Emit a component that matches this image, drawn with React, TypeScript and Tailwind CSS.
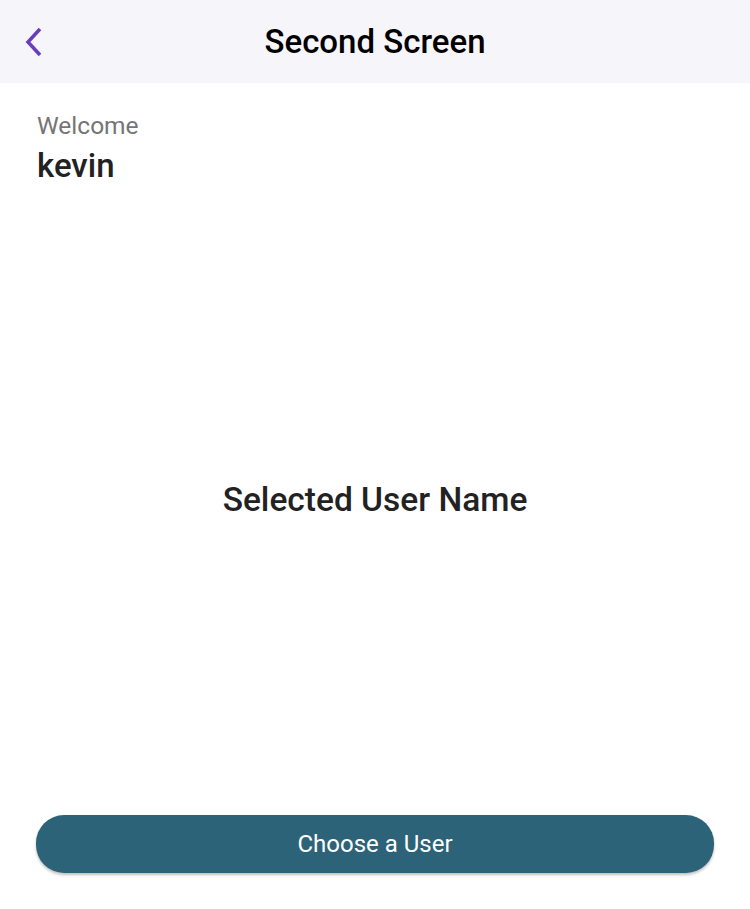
export default function App() {
  return (
    <div className="w-[750px] h-[909px] bg-white flex flex-col" style={{ fontFamily: "Roboto, sans-serif" }}>
      <div className="h-[83px] bg-[#f6f5fa] relative flex items-center justify-center shrink-0">
        <svg className="absolute left-[22px] top-[26px]" width="22" height="32" viewBox="0 0 22 32">
          <path d="M18 3 L6 16 L18 29" fill="none" stroke="#6a3dc0" strokeWidth="3.5" strokeLinecap="butt" strokeLinejoin="miter" />
        </svg>
        <span className="text-[33px] text-black font-medium">Second Screen</span>
      </div>
      <div className="px-[37px] pt-[27px] flex flex-col">
        <span className="text-[24.5px] text-[#757575] leading-[32px]">Welcome</span>
        <span className="text-[33px] text-[#222] font-medium leading-[38px] mt-[5px]">kevin</span>
      </div>
      <div className="flex-1 flex items-center justify-center">
        <span className="text-[33.5px] text-[#222] font-medium">Selected User Name</span>
      </div>
      <div className="px-[36px] pb-[36px]">
        <button className="w-full h-[58px] rounded-[28px] bg-[#2c6379] text-white text-[24px] shadow-[0_2px_3px_rgba(0,0,0,0.25)]">
          Choose a User
        </button>
      </div>
    </div>
  );
}
